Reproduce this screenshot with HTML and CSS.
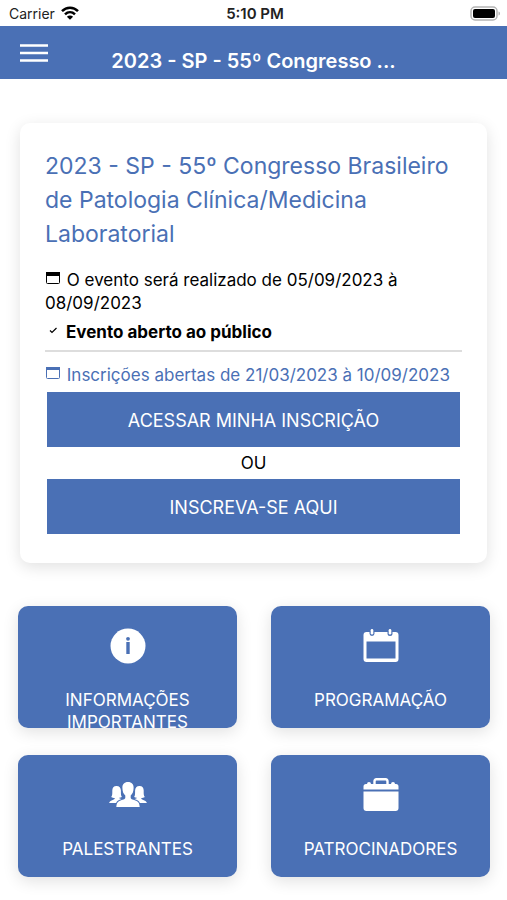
FILE: index.html
```html
<!DOCTYPE html>
<html lang="pt-BR">
<head>
  <meta charset="UTF-8">
  <meta name="viewport" content="width=device-width, initial-scale=1.0">
  <title>55º Congresso Brasileiro de Patologia Clínica</title>
  <link rel="stylesheet" href="styles.css">
</head>
<body>
  <div class="status-bar">
    <div class="carrier">
      <span>Carrier</span>
      <svg width="18" height="14" viewBox="0 0 18 14" fill="none" stroke="#000" stroke-width="2.5">
        <path d="M1 5.2C5.5.6 12.5.6 17 5.2"/>
        <path d="M4 8.4c2.9-2.8 7.1-2.8 10 0"/>
        <path d="M9 13.8L5.9 10.7c1.8-1.6 4.4-1.6 6.2 0z" fill="#000" stroke="none"/>
      </svg>
    </div>
    <span class="clock">5:10 PM</span>
    <svg class="battery" width="31" height="15" viewBox="0 0 31 15">
      <rect x="1" y="1" width="26" height="13" rx="4" fill="#fff" stroke="#b4b4b4" stroke-width="1.5"/>
      <rect x="3" y="3" width="22" height="9" rx="2" fill="#000"/>
      <path d="M28.5 5.5c2 .5 2 3.5 0 4z" fill="#b4b4b4"/>
    </svg>
  </div>

  <header class="header">
    <button class="menu-button" type="button" aria-label="Menu">
      <svg width="28" height="18" viewBox="0 0 28 18" stroke="#fff" stroke-width="2.4">
        <path d="M0 1.5h28M0 9h28M0 16.5h28"/>
      </svg>
    </button>
    <h1 class="header-title">2023 - SP - 55º Congresso ...</h1>
  </header>

  <main>
    <section class="card">
      <h2>2023 - SP - 55º Congresso Brasileiro de Patologia Clínica/Medicina Laboratorial</h2>
      <p><svg class="icon" width="16" height="15" viewBox="0 0 16 15"><rect x="1.5" y="1.5" width="13" height="11" rx="1" fill="none" stroke="currentColor"/><path d="M1 1h14v4H1z" fill="currentColor"/></svg> O evento será realizado de 05/09/2023 à 08/09/2023</p>
      <p class="public"><svg class="icon" width="16" height="15" viewBox="0 0 16 15"><path d="M5 7.500l2 2 4.500-4.500" fill="none" stroke="currentColor" stroke-width="1.2"/></svg> Evento aberto ao público</p>
      <hr>
      <p class="dates"><svg class="icon" width="16" height="15" viewBox="0 0 16 15"><rect x="1.5" y="1.5" width="13" height="11" rx="1" fill="none" stroke="currentColor"/><path d="M1 1h14v3H1z" fill="currentColor"/></svg> Inscrições abertas de 21/03/2023 à 10/09/2023</p>
      <button class="btn" type="button">ACESSAR MINHA INSCRIÇÃO</button>
      <p class="or">OU</p>
      <button class="btn" type="button">INSCREVA-SE AQUI</button>
    </section>

    <nav class="tiles">
      <a class="tile" href="#informacoes">
        <svg width="36" height="36" viewBox="0 0 36 36">
          <circle cx="18" cy="18" r="17.5" fill="#fff"/>
          <circle cx="18" cy="10.8" r="1.9" fill="#4a70b5"/>
          <path d="M16.3 14h3.4v12h-3.4z" fill="#4a70b5"/>
        </svg>
        <span>INFORMAÇÕES IMPORTANTES</span>
      </a>
      <a class="tile" href="#programacao">
        <svg width="36" height="36" viewBox="0 0 36 36" fill="#fff">
          <path fill-rule="evenodd" d="M3.500 4H6.500v1.500a2.500 2.500 0 0 0 5 0V4h13v1.500a2.500 2.500 0 0 0 5 0V4h3q3 0 3 3v24q0 3-3 3h-29q-3 0-3-3V7q0-3 3-3zM3.500 13.500v17h29v-17z"/>
          <rect x="7.7" y="1" width="2.6" height="5.500" rx="1.3"/>
          <rect x="25.7" y="1" width="2.6" height="5.500" rx="1.3"/>
        </svg>
        <span>PROGRAMAÇÃO</span>
      </a>
      <a class="tile" href="#palestrantes">
        <svg width="38" height="36" viewBox="0 0 38 36" fill="#fff">
          <path d="M19 5c-3.800 0-5.800 2.400-5.600 6 .1 3.400.9 5.800 2.900 7.500v2.300c0 1.700-3 2-5.500 3C8.300 24.800 7.500 27 7.300 30h23.400c-.2-3-1-5.200-3.500-6.200-2.500-1-5.500-1.300-5.500-3v-2.300c2-1.700 2.800-4.100 2.900-7.500.2-3.600-1.800-6-5.600-6z"/>
          <path id="side-person" d="M7.500 9C4.600 9 3.300 11 3.300 13.500c0 3 .2 5-1.100 6.500 1.200.8 2.400 1 3.600 1 0 1.600-1.700 1.900-3.200 2.500C.9 24.200.3 25 .2 26h6.900c1-1.900 2.500-3 5.600-3.900-1.800-.3-2.500-.6-2.500-1.300 1.100 0 1.900-.2 2.700-.8-1.200-1.500-.9-3.500-1-6.500C11.800 11 10.400 9 7.500 9z"/>
          <use href="#side-person" transform="matrix(-1 0 0 1 38 0)"/>
        </svg>
        <span>PALESTRANTES</span>
      </a>
      <a class="tile" href="#patrocinadores">
        <svg width="36" height="36" viewBox="0 0 36 36" fill="#fff">
          <path d="M.5 12.500V9.500q0-2.500 2.500-2.500h1q0-2 2-2t2 2h20q0-2 2-2t2 2h1q2.500 0 2.500 2.500v3z"/>
          <path d="M11.500 7.500V4.500Q11.500 2.200 13.500 2.200h9q2 0 2 2.300V7.500" fill="none" stroke="#fff" stroke-width="2.4"/>
          <path d="M.5 14.500h35V31q0 3-3 3h-29q-3 0-3-3z"/>
        </svg>
        <span>PATROCINADORES</span>
      </a>
    </nav>
  </main>
</body>
</html>
```

FILE: styles.css
```css
* {
  box-sizing: border-box;
}
body {
  margin: 0;
  background: #fff;
  color: #000;
  font-family: Inter, "Liberation Sans", sans-serif;
  font-size: 17px;
  line-height: 23px;
}
.status-bar {
  display: grid;
  grid-template-columns: 1fr auto 1fr;
  align-items: center;
  height: 26px;
  padding: 0 6px 0 9px;
  font-size: 14px;
  color: #222;
}
.carrier {
  display: flex;
  align-items: center;
  gap: 6px;
}
.clock {
  font-size: 15px;
  font-weight: 600;
}
.battery {
  justify-self: end;
}
.header {
  display: grid;
  grid-template-columns: 48px 1fr 48px;
  align-items: center;
  height: 53px;
  background: #4a70b5;
  color: #fff;
}
.menu-button {
  display: flex;
  justify-content: flex-end;
  padding: 0;
  border: none;
  background: none;
  cursor: pointer;
}
.header-title {
  margin: 0;
  padding-top: 18px;
  font-size: 20px;
  font-weight: 600;
  text-align: center;
}
.card {
  margin: 44px 20px 43px;
  padding: 26px 25px 29px;
  border-radius: 10px;
  box-shadow: 0 4px 16px rgba(0,0,0,0.12);
}
.card h2 {
  margin: 0 0 18px;
  color: #4a70b5;
  font-size: 23px;
  font-weight: 400;
  line-height: 34px;
}
.card p {
  margin: 0;
}
.icon {
  margin-right: 1px;
}
.card .public {
  margin-top: 6px;
  font-weight: 700;
}
.card hr {
  height: 2px;
  margin: 6px 0 12px;
  border: none;
  background: #ddd;
}
.card .dates {
  margin-bottom: 5px;
  color: #4a70b5;
}
.btn {
  display: block;
  width: calc(100% - 4px);
  height: 55px;
  margin: 0 2px;
  padding: 2px 0 0;
  border: none;
  background: #4a70b5;
  color: #fff;
  font-family: inherit;
  font-size: 18px;
  cursor: pointer;
}
.card .or {
  padding: 5px 0 4px;
  text-align: center;
}
.tiles {
  display: grid;
  grid-template-columns: 1fr 1fr;
  gap: 27px 34px;
  padding: 0 17px 22px 18px;
}
.tile {
  display: flex;
  flex-direction: column;
  align-items: center;
  gap: 25px;
  height: 122px;
  padding: 22px 30px 0;
  overflow: hidden;
  border-radius: 10px;
  background: #4a70b5;
  box-shadow: 0 4px 16px rgba(0,0,0,0.12);
  color: #fff;
  font-size: 17px;
  line-height: 22px;
  text-align: center;
  text-decoration: none;
}
.tile svg {
  flex-shrink: 0;
}
```
